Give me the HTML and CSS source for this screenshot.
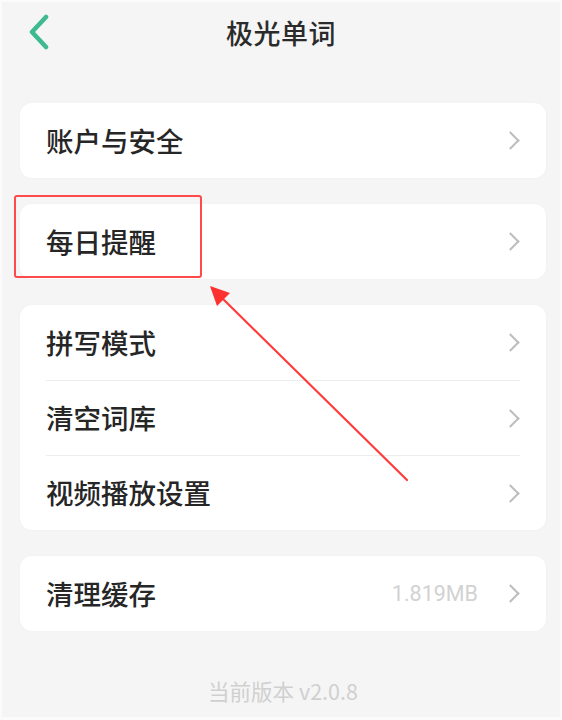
FILE: index.html
```html
<!DOCTYPE html>
<html lang="zh-CN">
<head>
<meta charset="utf-8">
<title>极光单词</title>
<link rel="stylesheet" href="styles.css">
</head>
<body>
<div class="page">
  <header class="topbar">
    <span class="back">
      <svg width="24" height="36" viewBox="0 0 24 36"><path d="M19 3 L5 18 L19 33" fill="none" stroke="#3dba8e" stroke-width="4.5" stroke-linecap="round" stroke-linejoin="round"/></svg>
    </span>
    <h1 class="title">极光单词</h1>
  </header>

  <main class="groups">
    <section class="card">
      <div class="row"><span class="label">账户与安全</span><span class="chev"></span></div>
    </section>
    <section class="card">
      <div class="row"><span class="label">每日提醒</span><span class="chev"></span></div>
    </section>
    <section class="card">
      <div class="row"><span class="label">拼写模式</span><span class="chev"></span></div>
      <div class="row divided"><span class="label">清空词库</span><span class="chev"></span></div>
      <div class="row divided"><span class="label">视频播放设置</span><span class="chev"></span></div>
    </section>
    <section class="card">
      <div class="row"><span class="label">清理缓存</span><span class="value">1.819MB</span><span class="chev"></span></div>
    </section>
  </main>

  <footer class="version">当前版本 v2.0.8</footer>

  <svg class="annot" width="562" height="720" viewBox="0 0 562 720">
    <rect x="15" y="196" width="186" height="81" rx="2" fill="none" stroke="#ff4a4a" stroke-width="2"/>
    <line x1="407" y1="480" x2="220" y2="296" stroke="#ff3c3c" stroke-width="2.2" stroke-linecap="round"/>
    <polygon points="210,286 230,293 217,306" fill="#ff3030"/>
  </svg>
</div>
</body>
</html>
```

FILE: styles.css
```css
html, body {
  margin: 0;
  padding: 0;
  background: #ffffff;
}
body {
  font-family: "Noto Sans CJK SC", "Noto Sans", sans-serif;
  color: #262626;
}
.page {
  position: relative;
  width: 562px;
  height: 720px;
  box-sizing: border-box;
  border: 2px solid #fbfbfb;
  border-bottom-width: 3px;
  background: #f5f5f5;
  overflow: hidden;
}
.topbar {
  position: relative;
  height: 62px;
  display: flex;
  align-items: center;
  justify-content: center;
}
.back {
  position: absolute;
  left: 25px;
  top: 12px;
  width: 24px;
  height: 36px;
}
.back svg { display: block; }
.title {
  margin: 0;
  font-size: 27px;
  font-weight: 500;
  letter-spacing: 0.5px;
  color: #2b2b2b;
  line-height: 1;
  padding-left: 0;
  margin-top: -2px;
}
.groups {
  padding: 39px 14px 0 18px;
  display: flex;
  flex-direction: column;
  gap: 26px;
}
.card {
  background: #ffffff;
  border-radius: 12px;
  box-shadow: 0 0 4px rgba(0,0,0,0.025);
  padding: 0 26px;
}
.row {
  height: 75px;
  display: flex;
  align-items: center;
  gap: 16px;
}
.divided {
  border-top: 1.5px solid #ededed;
  height: 74px;
}
.label {
  flex: 1;
  font-size: 27.5px;
  font-weight: 500;
  color: #262626;
  line-height: 1;
}
.value {
  font-family: "Roboto", "Noto Sans", sans-serif;
  font-size: 21.5px;
  color: #d2d2d2;
  margin-right: 10px;
}
.chev {
  width: 11px;
  height: 11px;
  border-top: 2px solid #bdbdbd;
  border-right: 2px solid #bdbdbd;
  transform: rotate(45deg);
  margin-right: 3px;
}
.version {
  margin-top: 44px;
  text-align: center;
  font-size: 21.5px;
  color: #d0d0d0;
  padding-left: 4px;
}
.annot {
  position: absolute;
  left: -2px;
  top: -2px;
  pointer-events: none;
}
```
